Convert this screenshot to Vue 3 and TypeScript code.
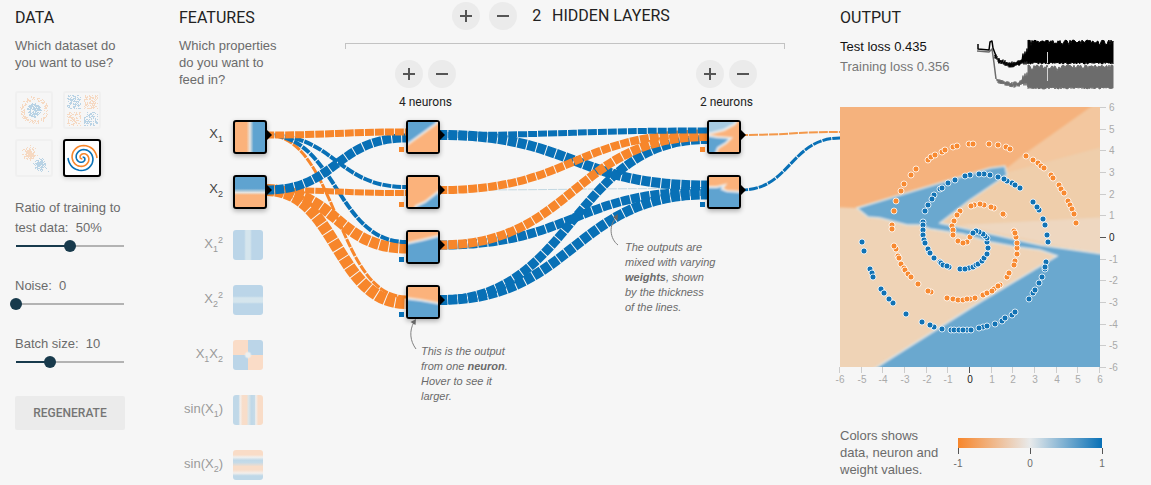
<script setup lang="ts">
import { computed, onBeforeUnmount, onMounted, ref } from 'vue'

const ORANGE = '#f7862b'
const BLUE = '#0870b6'

/* ---------- helpers ---------- */
function makeRandom(seed: number) {
  let s = seed
  return () => {
    s = (s * 16807) % 2147483647
    return s / 2147483647
  }
}
function toPairs(list: string): number[][] {
  return list.trim().split(/\s+/).map((p) => p.split(',').map(Number))
}

/* ---------- data sets ---------- */
interface Dot { x: number; y: number; c: string }
interface Dataset { id: string; label: string; dots: Dot[] }

function circleDots(): Dot[] {
  const r = makeRandom(71)
  const out: Dot[] = []
  for (let i = 0; i < 380; i++) {
    const inner = i % 2 === 0
    const a = r() * Math.PI * 2
    const d = inner ? Math.sqrt(r()) * 7 : 10 + r() * 4
    out.push({ x: Math.round(17 + d * Math.cos(a)), y: Math.round(17 + d * Math.sin(a)), c: inner ? BLUE : ORANGE })
  }
  return out
}
function xorDots(): Dot[] {
  const r = makeRandom(913)
  const out: Dot[] = []
  for (let i = 0; i < 420; i++) {
    const sx = r() > 0.5 ? 1 : -1
    const sy = r() > 0.5 ? 1 : -1
    out.push({
      x: Math.round(17 + sx * (1.5 + r() * 14)),
      y: Math.round(17 + sy * (1.5 + r() * 14)),
      c: sx === sy ? BLUE : ORANGE
    })
  }
  return out
}
function gaussDots(): Dot[] {
  const r = makeRandom(457)
  const g = () => (r() + r() + r() + r() - 2) * 5
  const out: Dot[] = []
  for (let i = 0; i < 320; i++) {
    const first = i % 2 === 0
    out.push({ x: Math.round((first ? 12 : 23) + g()), y: Math.round((first ? 12 : 23) + g()), c: first ? ORANGE : BLUE })
  }
  return out
}
function spiral(delta: number): string {
  let d = ''
  for (let i = 2; i <= 60; i++) {
    const u = i / 60
    const t = 3.5 * Math.PI * u + delta
    const x = 17.5 + 14.5 * u * Math.sin(t)
    const y = 17 - 14.5 * u * Math.cos(t)
    d += `${i === 2 ? 'M' : 'L'}${x.toFixed(1)},${y.toFixed(1)}`
  }
  return d
}
const datasets: Dataset[] = [
  { id: 'circle', label: 'Circle', dots: circleDots() },
  { id: 'xor', label: 'Exclusive or', dots: xorDots() },
  { id: 'gauss', label: 'Gaussian', dots: gaussDots() },
  { id: 'spiral', label: 'Spiral', dots: [] }
]
const selected = ref('spiral')

/* ---------- sliders ---------- */
const ratio = ref(50)
const noise = ref(0)
const batch = ref(10)
const fill = (v: number, min: number, max: number) => ({ '--p': String((v - min) / (max - min)) })

/* ---------- features ---------- */
const features = [
  { id: 'x', a: 'X', s1: '1', on: true },
  { id: 'y', a: 'X', s1: '2', on: true },
  { id: 'xx', a: 'X', s1: '1', sup: '2', on: false },
  { id: 'yy', a: 'X', s1: '2', sup: '2', on: false },
  { id: 'xy', a: 'X', s1: '1', b: 'X', s2: '2', on: false },
  { id: 'sinx', a: 'sin(X', s1: '1', b: ')', on: false },
  { id: 'siny', a: 'sin(X', s1: '2', b: ')', on: false }
]

/* ---------- network ---------- */
interface Shape { c: string; p: string }
interface Neuron { base: string; bias: string; shapes: Shape[] }
const LO = '#fbb27b'
const LB = '#5fa3d0'
const layers: { label: string; neurons: Neuron[] }[] = [
  {
    label: '4 neurons',
    neurons: [
      { base: LO, bias: ORANGE, shapes: [{ c: LB, p: '-5,-5 29,-5 29,1 0,22 -5,25' }] },
      { base: LO, bias: ORANGE, shapes: [{ c: LB, p: '6,34 8,29 17,25 31,14 35,34' }] },
      { base: LO, bias: BLUE, shapes: [{ c: LB, p: '-4,12 14,8 34,3 34,34 -4,34' }] },
      { base: LO, bias: BLUE, shapes: [{ c: LB, p: '-4,11 12,13 34,17 34,34 -4,34' }] }
    ]
  },
  {
    label: '2 neurons',
    neurons: [
      {
        base: LO,
        bias: ORANGE,
        shapes: [
          { c: '#a6cae1', p: '-4,-4 29,-4 26,2 15,8 3,11 -4,12' },
          { c: LB, p: '-4,13 8,15 22,16 17,21 9,26 6,34 -4,34' }
        ]
      },
      {
        base: LO,
        bias: BLUE,
        shapes: [
          { c: LB, p: '-4,10 8,10 16,8 13,12 18,14 34,15 34,34 -4,34' }
        ]
      }
    ]
  }
]

const network = ref<HTMLElement | null>(null)
const netWidth = ref(661)
let observer: ResizeObserver | undefined
function measure() {
  if (network.value) netWidth.value = network.value.clientWidth
}
onMounted(() => {
  measure()
  observer = new ResizeObserver(measure)
  if (network.value) observer.observe(network.value)
})
onBeforeUnmount(() => observer?.disconnect())

/* source row, target row, width, colour */
type Weight = [number, number, number, string]
const weights: Weight[][] = [
  [
    [0, 0, 7, ORANGE], [1, 0, 9, BLUE],
    [0, 1, 4, BLUE], [1, 1, 6, ORANGE],
    [0, 2, 4, BLUE], [1, 2, 11, ORANGE],
    [0, 3, 3, ORANGE], [1, 3, 12, ORANGE]
  ],
  [
    [0, 0, 6, BLUE], [1, 0, 8, ORANGE], [2, 0, 9, ORANGE], [3, 0, 9, BLUE],
    [0, 1, 10, BLUE], [1, 1, 1, '#c3d8e2'], [2, 1, 9, BLUE], [3, 1, 10, BLUE]
  ],
  [[0, 0, 2, '#f3984a'], [1, 0, 3, BLUE]]
]
const links = computed(() => {
  const w = netWidth.value
  const from = [88, 261, w - 99]
  const to = [227, w - 133, w]
  const out: { d: string; w: number; c: string }[] = []
  weights.forEach((set, li) => {
    const n = li === 1 ? 4 : 2
    set.forEach(([s, t, width, c]) => {
      const x0 = from[li]
      const x1 = to[li]
      const y0 = 135 + 55 * s
      const y1 = 135 + 55 * t + ((s - (n - 1) / 2) / n) * 12
      const m = (x0 + x1) / 2
      out.push({ d: `M${x0},${y0}C${m},${y0} ${m},${y1} ${x1},${y1}`, w: width, c })
    })
  })
  return out.reverse()
})

/* ---------- loss chart ---------- */
function noisyBand(top: number, bottom: number, seed: number): string {
  const r = makeRandom(seed)
  const up: string[] = []
  const down: string[] = []
  for (let x = 51; x <= 136; x++) {
    up.push(`${x},${(top + r() * r() * 7).toFixed(1)}`)
    down.unshift(`${x},${(bottom - r() * 2).toFixed(1)}`)
  }
  return up.concat(down).join(' ')
}
function noisyDip(points: number[][], seed: number): string {
  const r = makeRandom(seed)
  return points
    .flatMap(([x, y], i) => {
      if (i === 0) return [`${x},${y}`]
      const [px, py] = points[i - 1]
      const out: string[] = []
      for (let k = px; k <= x; k++) {
        const base = py + ((y - py) * (k - px)) / Math.max(1, x - px)
        out.push(`${k},${(base - 1 - r() * 2).toFixed(1)}`, `${k},${(base + 1 + r() * 2).toFixed(1)}`)
      }
      return out
    })
    .join(' ')
}
const testBand = noisyBand(1, 25, 31)
const trainBand = noisyBand(26, 50, 77)
const testDip = noisyDip(toPairs('18,17 22,22 33,26 42,24 46,22'), 5)
const trainDip = noisyDip(toPairs('20,41 24,43 34,46 42,45 46,43'), 8)

/* ---------- output points ---------- */
const orangePoints = toPairs(`
  88,53 91,50 95,48 102,45 105,43 113,40 117,39 129,37 133,37 149,37 158,38 166,40 170,42 186,49 193,53
  198,56 201,59 204,61 211,68 213,71 219,78 221,82 224,86 228,94 230,98 232,102 234,107 236,116
  76,62 71,68 64,77 61,84 56,94 54,104 52,118 52,122 56,142 54,139 58,149 59,151 61,157 64,161 65,163
  68,167 71,170 78,177 91,185 88,184 107,191 113,192 118,193 123,193 130,192 127,192 135,191 145,187
  143,188 147,186 154,182 152,184 160,178 158,179 167,170 169,166 175,154 174,158 177,147 177,141 177,136
  176,130 174,124 175,126 164,108 163,107 154,101 151,100 144,98 140,97 134,98 131,99 120,104 117,108
  114,114 112,119 113,123 113,128 118,134 127,135 123,136 130,130`)
const bluePoints = toPairs(`
  22,135 24,144 30,162 32,166 33,170 41,182 44,186 53,196 49,192 66,207 82,215 94,220 90,218 102,222
  111,223 114,223 119,223 127,223 123,223 131,223 143,220 139,221 147,219 155,217 162,214 165,211 172,208
  175,205 189,192 193,186 195,183 199,176 202,170 206,155 205,162 205,160 208,135 207,128 205,118 203,112
  199,103 197,100 193,95 180,81 172,76 175,78 167,74 164,72 158,70 150,68 144,67 139,67 130,68 125,69
  115,73 108,76 100,82 102,81 94,88 92,92 88,98 85,104 83,115 83,118 83,123 83,128 84,133 85,136 89,145
  88,142 90,146 94,151 100,155 101,156 103,158 109,160 107,159 120,162 129,161 125,162 133,160 136,158 138,157
  142,154 144,151 147,147 148,141 147,135 147,131 145,129 143,127 139,125 136,124 133,126`)
const ticks = [-6, -5, -4, -3, -2, -1, 0, 1, 2, 3, 4, 5, 6]
const tickPos = (v: number) => Math.round(((v + 6) * 260) / 12)
</script>

<template>
  <main class="page">
    <section class="data">
      <h2>Data</h2>
      <p class="lead">Which dataset do you want to use?</p>
      <div class="datasets">
        <button
          v-for="d in datasets"
          :key="d.id"
          type="button"
          class="dataset"
          :class="{ active: d.id === selected }"
          :aria-label="d.label"
          :aria-pressed="d.id === selected"
          @click="selected = d.id"
        >
          <svg viewBox="0 0 34 34">
            <rect v-for="(p, i) in d.dots" :key="i" :x="p.x" :y="p.y" width="1" height="1" :fill="p.c" />
            <template v-if="d.id === 'spiral'">
              <path :d="spiral(0)" fill="none" :stroke="BLUE" stroke-width="1.6" />
              <path :d="spiral(Math.PI)" fill="none" :stroke="ORANGE" stroke-width="1.6" />
            </template>
          </svg>
        </button>
      </div>
      <div class="control">
        <label for="ratio">Ratio of training to test data:&nbsp; {{ ratio }}%</label>
        <input id="ratio" v-model.number="ratio" type="range" min="10" max="90" :style="fill(ratio, 10, 90)" />
      </div>
      <div class="control">
        <label for="noise">Noise:&nbsp; {{ noise }}</label>
        <input id="noise" v-model.number="noise" type="range" min="0" max="50" :style="fill(noise, 0, 50)" />
      </div>
      <div class="control">
        <label for="batch">Batch size:&nbsp; {{ batch }}</label>
        <input id="batch" v-model.number="batch" type="range" min="1" max="30" :style="fill(batch, 1, 30)" />
      </div>
      <button type="button" class="regenerate">Regenerate</button>
    </section>

    <div ref="network" class="network">
      <svg class="links" aria-hidden="true">
        <path
          v-for="(l, i) in links"
          :key="i"
          :d="l.d"
          :stroke="l.c"
          :stroke-width="l.w"
          fill="none"
          stroke-dasharray="9 1"
          stroke-dashoffset="2"
        />
      </svg>

      <section class="features">
        <h2>Features</h2>
        <p class="lead">Which properties do you want to feed in?</p>
        <ul>
          <li v-for="f in features" :key="f.id" :class="{ on: f.on }">
            <span :id="'f-' + f.id" class="name">{{ f.a }}<sub>{{ f.s1 }}</sub><sup v-if="f.sup">{{ f.sup }}</sup>{{ f.b }}<sub v-if="f.s2">{{ f.s2 }}</sub></span>
            <button type="button" class="node" :class="['map-' + f.id, { on: f.on }]" :aria-labelledby="'f-' + f.id" />
          </li>
        </ul>
      </section>

      <section class="hidden-layers">
        <header>
          <button type="button" class="round" aria-label="Add layer">
            <svg viewBox="0 0 12 12"><path d="M6 0v12M0 6h12" /></svg>
          </button>
          <button type="button" class="round" aria-label="Remove layer">
            <svg viewBox="0 0 12 12"><path d="M0 6h12" /></svg>
          </button>
          <h2><span>2</span> Hidden layers</h2>
        </header>
        <div class="bracket" />
        <div class="columns">
          <div v-for="layer in layers" :key="layer.label" class="layer">
            <div class="pair">
              <button type="button" class="round" aria-label="Add neuron">
                <svg viewBox="0 0 12 12"><path d="M6 0v12M0 6h12" /></svg>
              </button>
              <button type="button" class="round" aria-label="Remove neuron">
                <svg viewBox="0 0 12 12"><path d="M0 6h12" /></svg>
              </button>
            </div>
            <div class="count">{{ layer.label }}</div>
            <div v-for="(n, i) in layer.neurons" :key="i" class="node on neuron">
              <svg viewBox="0 0 30 30">
                <defs>
                  <filter id="soft" x="-20%" y="-20%" width="140%" height="140%"><feGaussianBlur stdDeviation="0.9" /></filter>
                </defs>
                <rect width="30" height="30" :fill="n.base" />
                <g filter="url(#soft)">
                  <polygon v-for="(s, k) in n.shapes" :key="k" :points="s.p" :fill="s.c" stroke="#eef1f2" stroke-width="2" />
                </g>
              </svg>
              <i class="bias" :class="{ blue: n.bias === BLUE }" />
            </div>
          </div>
        </div>

        <div class="callout weights">
          <svg viewBox="0 0 14 34">
            <path d="M7 32C-1 26-3 12 6 4" />
            <path class="tip" d="M7 1L2 4L6.500 8z" />
          </svg>
          <p>The outputs are<br />mixed with varying<br /><b>weights</b>, shown<br />by the thickness<br />of the lines.</p>
        </div>
        <div class="callout output-note">
          <svg viewBox="0 0 14 34">
            <path d="M9 32C3 24 2 14 7 5" />
            <path class="tip" d="M9 2L3.500 5L8.500 8z" />
          </svg>
          <p>This is the output<br />from one <b>neuron</b>.<br />Hover to see it<br />larger.</p>
        </div>
      </section>
      <svg class="links arrows" aria-hidden="true">
        <path v-for="i in 2" :key="'f' + i" :d="`M88,${75 + 55 * i}l5,5l-5,5z`" />
        <path v-for="i in 4" :key="'h' + i" :d="`M261,${75 + 55 * i}l5,5l-5,5z`" />
        <path v-for="i in 2" :key="'o' + i" :d="`M${netWidth - 99},${75 + 55 * i}l5,5l-5,5z`" />
      </svg>
    </div>

    <section class="output">
      <h2>Output</h2>
      <div class="loss">
        <div class="numbers">
          <div class="test">Test loss 0.435</div>
          <div class="train">Training loss 0.356</div>
        </div>
        <svg class="chart" viewBox="0 0 137 52" role="img" aria-label="Loss over time">
          <g fill="none" stroke="#6c6c6c" stroke-linejoin="round">
            <polyline points="0,12 12,13 15,10 17,24 19,40" stroke-width="1.500" />
            <polyline :points="trainDip" />
            <polyline points="45,45 46,37 47,46 48,35 49,46 50,34 51,48" stroke-width="1.500" />
            <polygon :points="trainBand" fill="#6c6c6c" />
          </g>
          <g fill="none" stroke="#000" stroke-linejoin="round">
            <polyline points="1,5 1,10 12,11 13,3 15,2 16,9 19,17" stroke-width="1.500" />
            <polyline :points="testDip" />
            <polyline points="45,23 46,15 47,25 48,13 49,25 50,10 51,25" stroke-width="1.500" />
            <polygon :points="testBand" fill="#000" />
          </g>
          <path d="M70.500 13V24M70.500 28V42" stroke="#d5d5d5" />
        </svg>
      </div>

      <div class="plot">
        <svg class="heatmap" viewBox="0 0 260 260" role="img" aria-label="Classifier output">
          <defs>
            <filter id="edge" x="-5%" y="-5%" width="110%" height="110%"><feGaussianBlur stdDeviation="1.2" /></filter>
          </defs>
          <rect width="260" height="260" fill="#efd3b6" />
          <g filter="url(#edge)">
            <polygon points="140,70 252,-8 270,-8 270,150 100,116" fill="#efceab" />
            <polygon points="120,118 270,110 270,150" fill="#eed7c0" />
            <polygon points="150,70 250,-8 270,-8 270,38" fill="#f3c79f" />
            <polygon points="-8,-8 262,-8 190,43 167,61 17,101 -8,100" fill="#f5b27d" />
          </g>
          <g filter="url(#edge)" fill="#6aa8cf" stroke="#dde5e6" stroke-width="1.5">
            <polygon
              points="17,101 73,84 150,61 165,59 167,68 130,93 100,116 147,126 200,138 270,148 270,270 20,270 37,260 140,195 217,149 200,143 177,140 150,135 123,127 90,122 80,118 67,118 40,111 28,110"
            />
          </g>
          <g stroke="#fff" stroke-opacity="0.8">
            <circle v-for="(p, i) in orangePoints" :key="'o' + i" :cx="p[0]" :cy="p[1]" r="3" fill="#f88a31" />
            <circle v-for="(p, i) in bluePoints" :key="'b' + i" :cx="p[0]" :cy="p[1]" r="3" fill="#1273b5" />
          </g>
        </svg>
        <svg class="axis-y" viewBox="0 0 30 272">
          <g v-for="t in ticks" :key="t" :class="{ zero: t === 0 }">
            <path :d="`M0,${266.5 - tickPos(t)}h6`" />
            <text x="9" :y="270 - tickPos(t)">{{ t }}</text>
          </g>
        </svg>
        <svg class="axis-x" viewBox="0 0 272 20">
          <g v-for="t in ticks" :key="t" :class="{ zero: t === 0 }">
            <path :d="`M${tickPos(t) + 5.5},0v6`" />
            <text :x="tickPos(t) + 6" y="16" text-anchor="middle">{{ t }}</text>
          </g>
        </svg>
      </div>

      <div class="legend">
        <p>Colors shows data, neuron and weight values.</p>
        <div class="scale">
          <div class="bar" />
          <div class="marks"><span>-1</span><span>0</span><span>1</span></div>
        </div>
      </div>
    </section>
  </main>
</template>

<style>
body {
  margin: 0;
  background: #f6f6f6;
}
</style>

<style scoped>
.page {
  display: grid;
  grid-template-columns: 110px minmax(0, 1fr) 311px;
  padding-left: 15px;
  min-width: 1000px;
  box-sizing: border-box;
  background: #f6f6f6;
  color: #6b6b6b;
  font: 13px/17px "Liberation Sans", Arial, sans-serif;
}
h2,
p,
ul {
  margin: 0;
  padding: 0;
}
button {
  border: 0;
  padding: 0;
  font: inherit;
  cursor: pointer;
}
h2 {
  font: 400 16px/20px Roboto, sans-serif;
  color: #222;
  text-transform: uppercase;
}
.data,
.features,
.output {
  padding-top: 8px;
}
.lead {
  margin-top: 9px;
}
.data .lead {
  width: 106px;
}

/* data column */
.datasets {
  display: grid;
  grid-template-columns: 38px 38px;
  gap: 10px;
  margin-top: 20px;
}
.dataset {
  display: block;
  box-sizing: border-box;
  height: 38px;
  border: 2px solid #f0f0f0;
  border-radius: 3px;
  background: transparent;
}
.dataset svg {
  display: block;
  width: 34px;
  height: 34px;
  opacity: 0.25;
}
.dataset.active {
  border-color: #000;
  background: #fff;
  box-shadow: 0 1px 5px rgba(0, 0, 0, 0.2);
}
.dataset.active svg {
  opacity: 1;
}
.control {
  display: flex;
  flex-direction: column;
  line-height: 20px;
  margin-top: 20px;
}
.datasets + .control {
  margin-top: 21px;
}
.control input {
  --end: calc(6px + (100% - 12px) * var(--p));
  appearance: none;
  width: 120px;
  height: 12px;
  margin: 2px 0 4px -5px;
  background: linear-gradient(
      to right,
      transparent 6px,
      #183a4c 6px,
      #183a4c var(--end),
      #b3b3b3 var(--end),
      #b3b3b3 calc(100% - 6px),
      transparent calc(100% - 6px)
    )
    center / 100% 2px no-repeat;
}
.control input::-webkit-slider-thumb {
  appearance: none;
  width: 12px;
  height: 12px;
  border-radius: 50%;
  background: #183a4c;
}
.regenerate {
  width: 100%;
  height: 34px;
  margin-top: 24px;
  border-radius: 2px;
  background: #ebebeb;
  color: #757575;
  font: 500 12px/34px Roboto, sans-serif;
  text-transform: uppercase;
}

/* network */
.network {
  position: relative;
  display: flex;
  margin-left: 54px;
}
.links {
  position: absolute;
  left: 0;
  top: 0;
  width: 100%;
  height: 100%;
  overflow: visible;
  pointer-events: none;
}
.arrows {
  fill: #000;
}
.features {
  flex: 0 0 166px;
}
.features .lead {
  width: 110px;
}
.features ul {
  position: relative;
  display: grid;
  gap: 21px;
  margin-top: 32px;
  list-style: none;
}
.features li {
  display: flex;
  height: 34px;
  color: #9a9a9a;
}
.features li.on {
  color: #444;
}
.name {
  width: 44px;
  margin-right: 10px;
  padding-top: 5px;
  box-sizing: border-box;
  text-align: right;
  white-space: nowrap;
}
sub,
sup {
  font-size: 9px;
  line-height: 0;
}
.node {
  display: block;
  position: relative;
  width: 30px;
  height: 30px;
  border-radius: 3px;
}
.node.on {
  border: 2px solid #000;
  box-shadow: 0 2px 5px rgba(0, 0, 0, 0.3);
}
.node.on.map-x,
.node.on.map-y {
  width: 34px;
  height: 34px;
}
.map-x {
  background: linear-gradient(to right, #fbb27b 38%, #e6e3df 50%, #5fa3d0 62%);
}
.map-y {
  background: linear-gradient(to bottom, #5fa3d0 38%, #e6e3df 52%, #fbb27b 60%);
}
.map-xx {
  background: linear-gradient(to right, #bbd5e8 37%, #d5e5ed 43%, #d5e5ed 57%, #bbd5e8 63%);
}
.map-yy {
  background: linear-gradient(to bottom, #bbd5e8 37%, #d5e5ed 43%, #d5e5ed 57%, #bbd5e8 63%);
}
.map-xy {
  background:
    radial-gradient(circle, #ecefef 2px, transparent 4px),
    conic-gradient(#bbd5e8 25%, #fadcc7 0 50%, #bbd5e8 0 75%, #fadcc7 0);
}
.map-sinx {
  background: linear-gradient(to right, #c0d8e8 18%, #f3efec 24%, #f8ddc9 32%, #f8ddc9 45%, #dbe5e8 52%, #bfd8e8 62%, #c6dbe8 72%, #f0f0ef 76%, #f9dcc7 84%);
}
.map-siny {
  background: linear-gradient(to bottom, #f9dcc7 16%, #f0f0ef 24%, #c0d8e8 34%, #c6dbe8 42%, #f8ddc9 55%, #f8ddc9 66%, #f3efec 77%, #bfd8e8 86%);
}
.hidden-layers {
  position: relative;
  flex: 1;
  margin-right: 55px;
}
.hidden-layers header {
  display: flex;
  align-items: center;
  justify-content: center;
  gap: 9px;
  padding: 2px 8px 0 0;
}
.hidden-layers h2 {
  margin-left: 6px;
}
.hidden-layers h2 span {
  margin-right: 7px;
}
.round {
  display: flex;
  align-items: center;
  justify-content: center;
  width: 28px;
  height: 28px;
  border-radius: 50%;
  background: #ebebeb;
}
.round svg {
  width: 12px;
  height: 12px;
  fill: none;
  stroke: #555;
  stroke-width: 2;
}
.bracket {
  height: 5px;
  margin-top: 13px;
  border: 1px solid #c3c3c3;
  border-bottom: 0;
}
.columns {
  display: flex;
  justify-content: space-between;
  margin-top: 11px;
  padding: 0 28px 0 50px;
}
.layer {
  width: 61px;
}
.pair {
  display: flex;
  gap: 5px;
}
.count {
  margin: 6px 0 9px;
  text-align: center;
  white-space: nowrap;
  font: 12px/17px Roboto, sans-serif;
  color: #222;
}
.neuron {
  margin: 0 0 21px 11px;
}
.neuron svg {
  display: block;
  width: 30px;
  height: 30px;
}
.bias {
  position: absolute;
  left: -9px;
  bottom: 0;
  width: 5px;
  height: 5px;
  background: #f7862b;
}
.bias.blue {
  background: #0870b6;
}
.callout {
  position: absolute;
  display: flex;
  font: italic 11px/15px "Liberation Sans", Arial, sans-serif;
}
.callout svg {
  flex: none;
  width: 14px;
  height: 34px;
  fill: none;
  stroke: #808080;
  overflow: visible;
}
.callout .tip {
  fill: #666;
  stroke: none;
}
.callout p {
  flex: 1;
  padding-top: 27px;
  white-space: nowrap;
}
.weights {
  right: 62px;
  top: 213px;
  width: 112px;
}
.output-note {
  left: 62px;
  top: 317px;
  width: 108px;
}

/* output */
.output {
  min-width: 0;
}
.loss {
  display: flex;
  justify-content: space-between;
  width: 274px;
  margin-top: 9px;
}
.numbers {
  line-height: 20px;
}
.test {
  color: #111;
}
.train {
  color: #777;
}
.chart {
  display: block;
  width: 137px;
  height: 52px;
  margin-top: 2px;
}
.plot {
  display: grid;
  grid-template-columns: 260px 30px;
  margin-top: 16px;
}
.heatmap {
  width: 260px;
  height: 260px;
  display: block;
}
.axis-y {
  width: 30px;
  height: 272px;
  margin: -6px 0;
}
.axis-x {
  width: 272px;
  height: 20px;
  margin-left: -6px;
}
.axis-x path,
.axis-y path {
  stroke: #ccc;
}
.axis-x text,
.axis-y text {
  fill: #aaa;
  font-size: 10px;
}
.axis-x .zero path,
.axis-y .zero path {
  stroke: #555;
}
.axis-x .zero text,
.axis-y .zero text {
  fill: #222;
}
.legend {
  display: flex;
  margin-top: 40px;
}
.legend p {
  width: 105px;
}
.scale {
  width: 144px;
  margin: 11px 0 0 13px;
}
.bar {
  height: 10px;
  background: linear-gradient(to right, #f7862b, #e8eaeb, #0870b6);
}
.marks {
  display: flex;
  justify-content: space-between;
  margin: 0 -10px;
  font-size: 10px;
  line-height: 12px;
}
.marks span {
  width: 20px;
  text-align: center;
}
.marks span::before {
  content: "";
  display: block;
  width: 1px;
  height: 6px;
  margin: 0 auto 4px;
  background: #555;
}
</style>
